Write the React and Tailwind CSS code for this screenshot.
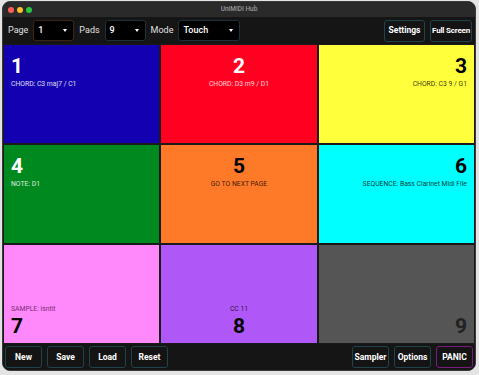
import React from 'react'

const pads = [
  { n: 1, label: 'CHORD: C3 maj7 / C1', bg: 'bg-[#1300b0]', text: 'text-white', sub: 'text-white/85', align: 'items-start text-left', pos: 'top' },
  { n: 2, label: 'CHORD: D3 m9 / D1', bg: 'bg-[#ff0020]', text: 'text-white', sub: 'text-white/80', align: 'items-center text-center', pos: 'top' },
  { n: 3, label: 'CHORD: C3 9 / G1', bg: 'bg-[#ffff3c]', text: 'text-black', sub: 'text-black/80', align: 'items-end text-right', pos: 'top' },
  { n: 4, label: 'NOTE: D1', bg: 'bg-[#00891e]', text: 'text-white', sub: 'text-white/85', align: 'items-start text-left', pos: 'top' },
  { n: 5, label: 'GO TO NEXT PAGE', bg: 'bg-[#ff7a28]', text: 'text-black', sub: 'text-black/80', align: 'items-center text-center', pos: 'top' },
  { n: 6, label: 'SEQUENCE: Bass Clarinet Midi File', bg: 'bg-[#00ffff]', text: 'text-black', sub: 'text-black/80', align: 'items-end text-right', pos: 'top' },
  { n: 7, label: 'SAMPLE: isntit', bg: 'bg-[#ff88fa]', text: 'text-black', sub: 'text-[#7a2c78]', align: 'items-start text-left', pos: 'bottom' },
  { n: 8, label: 'CC 11', bg: 'bg-[#b057f8]', text: 'text-black', sub: 'text-black/80', align: 'items-center text-center', pos: 'bottom' },
  { n: 9, label: '', bg: 'bg-[#555555]', text: 'text-[#222]', sub: 'text-black/80', align: 'items-end text-right', pos: 'bottom' },
]

function Select({ value, width, border }) {
  return (
    <div className={`flex items-center justify-between h-[21px] ${width} bg-black border ${border} rounded-[3px] pl-[4px] pr-[6px]`}>
      <span className="text-[9px] font-medium text-white">{value}</span>
      <span className="w-0 h-0 border-l-[2.5px] border-r-[2.5px] border-t-[3px] border-l-transparent border-r-transparent border-t-white" />
    </div>
  )
}

function Btn({ children, w, purple, small }) {
  return (
    <button className={`h-[22px] ${w} bg-[#141414] border rounded-[3px] ${purple ? 'border-[#7a1a7e]' : 'border-[#1e434a]'} text-white ${small ? 'text-[8px] tracking-tight' : 'text-[8.5px]'} font-bold whitespace-nowrap px-0`}>
      {children}
    </button>
  )
}

function Pad({ p }) {
  return (
    <div className={`${p.bg} border border-[#1a1a1a] flex flex-col ${p.align} ${p.pos === 'top' ? 'justify-start pt-[11px]' : 'justify-end pb-[6px]'} px-[7px]`}>
      {p.pos === 'top' ? (
        <>
          <div className={`${p.text} text-[21px] font-bold leading-[21px]`}>{p.n}</div>
          <div className={`${p.sub} text-[6.8px] leading-[9px] mt-[3px]`}>{p.label}</div>
        </>
      ) : (
        <>
          {p.label && <div className={`${p.sub} text-[6.8px] leading-[9px] mb-[2px]`}>{p.label}</div>}
          <div className={`${p.text} text-[21px] font-bold leading-[21px]`}>{p.n}</div>
        </>
      )}
    </div>
  )
}

export default function App() {
  return (
    <div className="w-[479px] h-[375px] bg-[#e4e4e4] pt-[1px] pl-[2px]" style={{ fontFamily: 'Roboto, "Liberation Sans", sans-serif' }}>
      <div className="w-[474px] h-[370px] bg-[#121212] rounded-[8px] overflow-hidden flex flex-col border border-[#3a3a3a]">
        {/* title bar */}
        <div className="h-[15px] bg-[#2a2a2a] flex items-center relative px-[5px] gap-[3px]">
          <span className="w-[6px] h-[6px] rounded-full bg-[#fe5f57]" />
          <span className="w-[6px] h-[6px] rounded-full bg-[#febc2e]" />
          <span className="w-[6px] h-[6px] rounded-full bg-[#28c840]" />
          <span className="absolute left-0 right-0 text-center text-[6.5px] text-[#9a9a9a] font-medium">UniMIDI Hub</span>
        </div>
        {/* toolbar */}
        <div className="h-[27px] bg-[#151515] flex items-center pl-[5px] pr-[3px]">
          <span className="text-[9px] text-[#e0e0e0] mr-[5px]">Page</span>
          <Select value="1" width="w-[41px]" border="border-[#3c2618]" />
          <span className="text-[9px] text-[#e0e0e0] ml-[5px] mr-[5px]">Pads</span>
          <Select value="9" width="w-[41px]" border="border-[#1c3238]" />
          <span className="text-[9px] text-[#e0e0e0] ml-[5px] mr-[5px]">Mode</span>
          <Select value="Touch" width="w-[62px]" border="border-[#1c3238]" />
          <div className="flex-1" />
          <div className="flex gap-[5px]">
            <Btn w="w-[41px]">Settings</Btn>
            <Btn w="w-[42px]" small>Full Screen</Btn>
          </div>
        </div>
        {/* pads */}
        <div className="grid grid-cols-3 grid-rows-3 h-[300px] bg-[#1a1a1a]">
          {pads.map(p => <Pad key={p.n} p={p} />)}
        </div>
        {/* bottom bar */}
        <div className="flex-1 bg-[#151515] flex items-center px-[2px]">
          <div className="flex gap-[5px]">
            <Btn w="w-[37px]">New</Btn>
            <Btn w="w-[37px]">Save</Btn>
            <Btn w="w-[37px]">Load</Btn>
            <Btn w="w-[37px]">Reset</Btn>
          </div>
          <div className="flex-1" />
          <div className="flex gap-[5px]">
            <Btn w="w-[37px]">Sampler</Btn>
            <Btn w="w-[37px]">Options</Btn>
            <Btn w="w-[37px]" purple>PANIC</Btn>
          </div>
        </div>
      </div>
    </div>
  )
}
